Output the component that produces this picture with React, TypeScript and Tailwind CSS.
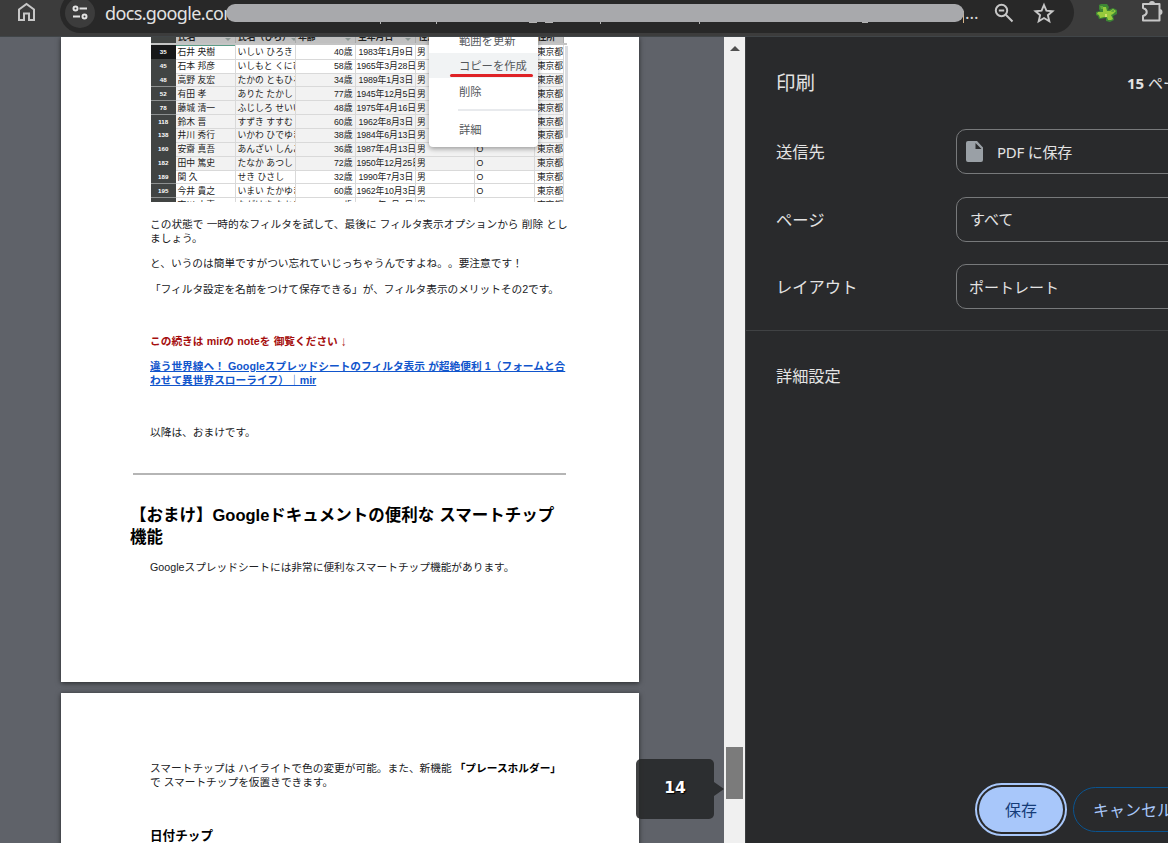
import type { ReactNode } from "react"

const rows = [
    { no: "35", name: "石井 央樹", kana: "いしい ひろき", age: "40歳", birth: "1983年1月9日" },
    { no: "45", name: "石本 邦彦", kana: "いしもと くにひこ", age: "58歳", birth: "1965年3月28日" },
    { no: "48", name: "高野 友宏", kana: "たかの ともひろ", age: "34歳", birth: "1989年1月3日", shaded: true },
    { no: "52", name: "有田 孝", kana: "ありた たかし", age: "77歳", birth: "1945年12月5日", shaded: true },
    { no: "78", name: "藤城 清一", kana: "ふじしろ せいいち", age: "48歳", birth: "1975年4月16日", shaded: true },
    { no: "118", name: "鈴木 晋", kana: "すずき すすむ", age: "60歳", birth: "1962年8月3日", shaded: true },
    { no: "138", name: "井川 秀行", kana: "いかわ ひでゆき", age: "38歳", birth: "1984年6月13日", shaded: true },
    { no: "160", name: "安齋 真吾", kana: "あんざい しんご", age: "36歳", birth: "1987年4月13日", shaded: true },
    { no: "182", name: "田中 篤史", kana: "たなか あつし", age: "72歳", birth: "1950年12月25日", shaded: true },
    { no: "189", name: "関 久", kana: "せき ひさし", age: "32歳", birth: "1990年7月3日" },
    { no: "195", name: "今井 貴之", kana: "いまい たかゆき", age: "60歳", birth: "1962年10月3日" },
    { no: "200", name: "市川 大喜", kana: "ながはま なおき", age: "34歳", birth: "1989年4月4日" },
]

const headings = ["氏名", "氏名（ひら）", "年齢", "生年月日", "性別", "", "住所"]

const columns = "grid grid-cols-[24.5px_60px_60px_60px_60.5px_58.5px_60.5px_28.5px]"

function Cell({ children, className = "pl-[2.5px]" }: { children?: ReactNode; className?: string }) {
    return (
        <div className={`overflow-hidden whitespace-nowrap border-r border-b border-[#d9d9d9] ${className}`}>
            {children}
        </div>
    )
}

function SheetTable() {
    return (
        <div className="relative h-[165px] w-[417px] overflow-hidden text-[8.8px] leading-[15px] text-[#222]">
            <div className={`${columns} h-[6px] w-[412.5px] overflow-hidden bg-[#c0c0c0]`}>
                <div className="h-[6px] bg-[#414443]" />
                {headings.map((h, i) => (
                    <div key={i} className="flex h-[6px] justify-between overflow-hidden border-r border-[#aaa] pl-[2.5px] pr-1 font-bold whitespace-nowrap">
                        <span className="-mt-[7px]">{h}</span>
                        {i < 4 && <span className="mt-[1px] h-0 w-0 border-x-[3px] border-t-[3px] border-x-transparent border-t-[#8b9693]" />}
                    </div>
                ))}
            </div>
            <div className="h-[2.3px] w-[416px] bg-[#c4c4c4]" />
            {rows.map((r, i) => (
                <div key={r.no} className={`${columns} h-[13.85px] w-[412.5px] ${r.shaded ? "bg-[#f2f2f2]" : "bg-white"}`}>
                    <div className={`border-b border-[#8d9090] text-center text-[6.2px] leading-[13.5px] font-bold text-white ${i === 0 ? "bg-[#171819]" : "bg-[#414443]"}`}>
                        {r.no}
                    </div>
                    <Cell className={i === 0 ? "pl-[2px] shadow-[inset_0_1px_0_#5b9c87]" : "pl-[2px]"}>{r.name}</Cell>
                    <Cell className="pl-[2px]">{r.kana}</Cell>
                    <Cell className="pr-[2px] text-right">{r.age}</Cell>
                    <Cell className="pl-[1px] text-center tracking-[-0.12px]">{r.birth}</Cell>
                    <Cell className="pl-[1px]">男</Cell>
                    <Cell className="pl-[2px]">O</Cell>
                    <Cell className="pl-[2px] tracking-[-0.2px]">東京都</Cell>
                </div>
            ))}
            <div className="absolute top-[9px] right-0 h-[92px] w-[3px] rounded-b bg-[#dadce0]" />

            {/* Filter view menu */}
            <div className="absolute -top-2 left-[278px] h-[118px] w-[109px] overflow-hidden rounded-b bg-white text-[11.3px] text-[#55585c] shadow-[0_2px_5px_rgba(0,0,0,0.35)]">
                <div className="h-[24px] pl-[30px] leading-[24px]">範囲を更新</div>
                <div className="h-[25px] bg-[#f1f3f4] pl-[30px] leading-[26px]">コピーを作成</div>
                <div className="h-[26px] pl-[30px] leading-[28px]">削除</div>
                <div className="mt-[5px] ml-[29px] h-[2px] bg-[#e8eaed]" />
                <div className="pt-[6px] pl-[30px] leading-[26px]">詳細</div>
            </div>
            <div className="absolute top-[37px] left-[299px] h-[3px] w-[83px] rounded-full bg-[#df2226]" />
        </div>
    )
}

function Preview() {
    return (
        <div className="flex w-[724px] shrink-0 flex-col items-start overflow-hidden bg-[#5f6269] pl-[61px] font-['Liberation_Sans','Noto_Sans_CJK_JP',sans-serif] [text-spacing-trim:space-all]">
            <div className="h-[645px] w-[578px] shrink-0 overflow-hidden bg-white pl-[90px] text-[10.69px] leading-[14px] whitespace-nowrap text-[#202124] shadow-[0_1px_5px_rgba(0,0,0,0.6)]">
                <SheetTable />
                <div className="-ml-px [word-spacing:0.25px]">
                    <p className="mt-[15px]">この状態で 一時的なフィルタを試して、最後に フィルタ表示オプションから 削除 とし<br />ましょう。</p>
                    <p className="mt-[11px]">と、いうのは簡単ですがつい忘れていじっちゃうんですよね。。要注意です！</p>
                    <p className="mt-[12px] tracking-[-0.03px]">「フィルタ設定を名前をつけて保存できる」が、フィルタ表示のメリットその2です。</p>
                    <p className="mt-[38px] font-bold text-[#a50e0e]">この続きは mirの noteを 御覧ください <span className="inline-block scale-y-125 font-normal">↓</span></p>
                    <p className="mt-[11px] font-bold text-[#1155cc] underline">
                        違う世界線へ！ Googleスプレッドシートのフィルタ表示 が超絶便利 1（フォームと合<br />わせて異世界スローライフ）｜mir
                    </p>
                    <p className="mt-[38px]">以降は、おまけです。</p>
                    <hr className="mt-[34px] -ml-[17px] w-[433px] border-t-2 border-[#b5b5b5]" />
                    <h1 className="mt-[29px] -ml-[20px] text-[16.5px] leading-[22px] font-bold text-black">
                        【おまけ】Googleドキュメントの便利な スマートチップ<br />機能
                    </h1>
                    <p className="mt-[12px]">Googleスプレッドシートには非常に便利なスマートチップ機能があります。</p>
                </div>
            </div>
            <div className="mt-[11px] h-[160px] w-[578px] shrink-0 bg-white pt-[68px] pl-[89px] text-[10.69px] leading-[14px] whitespace-nowrap text-[#202124] shadow-[0_1px_5px_rgba(0,0,0,0.6)]">
                <p>スマートチップは ハイライトで色の変更が可能。また、新機能 <b className="text-black">「プレースホルダー」</b><br />で スマートチップを仮置きできます。</p>
                <h2 className="mt-[39px] text-[12.6px] leading-[16px] font-bold text-black">日付チップ</h2>
            </div>
        </div>
    )
}

function Toolbar() {
    return (
        <header className="flex h-[37px] shrink-0 items-start overflow-hidden border-b border-[#404548] bg-[#3c3c3c]">
            <svg className="mt-[2px] ml-[16px] h-5 w-5 shrink-0" viewBox="0 0 20 20" fill="none" stroke="#c7c7c7" strokeWidth="2">
                <path d="M3 18V7.5L10.5 2L18 7.5V18H13V11.5H8V18Z" />
            </svg>
            <div className="ml-[24px] flex h-[41px] w-[1014px] shrink-0 -translate-y-2 items-center rounded-full bg-[#282828]">
                <div className="ml-[5px] flex h-[30px] w-[30px] shrink-0 items-center justify-center rounded-full bg-[#3c3c3c]">
                    <svg className="h-[18px] w-[18px]" viewBox="0 0 18 18" fill="none" stroke="#e3e3e3" strokeWidth="2">
                        <circle cx="4.5" cy="4.5" r="2" />
                        <path d="M8.5 4.5H16M2 12.5H9" />
                        <circle cx="13.5" cy="12.5" r="2" />
                    </svg>
                </div>
                <span className="ml-[10px] w-[121px] shrink-0 font-['Noto_Sans',sans-serif] text-[18px] leading-[24px] tracking-[-0.64px] whitespace-nowrap text-[#e3e3e3]">docs.google.com</span>
                {/* Masked part of the address, with the descenders that stay below it */}
                <div className="relative h-[18px] w-[738px] shrink-0 rounded-full bg-[#a8a9ac]">
                    <svg className="absolute top-[18px] left-0 h-[2px] w-full" viewBox="0 0 738 2" fill="#b4b4b4">
                        <path d="M154 0h1v2h-1zM210 0h1v2h-1zM303 0h8v1h-8zM319 0h8v1h-8zM374 0h1v2h-1zM473 0h1v2h-1zM636 0h6v1h-6z" />
                    </svg>
                </div>
                <div className="mt-[9px] -ml-px h-[12px] w-px shrink-0 bg-[#d8b58a]" />
                <span className="ml-[1px] w-[27px] shrink-0 font-['Noto_Sans',sans-serif] text-[17px] text-[#d8d8d8]">...</span>
                <svg className="h-6 w-6 shrink-0" viewBox="0 0 24 24" fill="none" stroke="#c7c7c7" strokeWidth="2">
                    <circle cx="9.5" cy="9.5" r="5.7" />
                    <path d="M13.8 13.8L20.5 20.5M6.8 9.5H12.2" />
                </svg>
                <svg className="ml-[16px] h-6 w-6 shrink-0" viewBox="0 0 24 24" fill="none" stroke="#c7c7c7" strokeWidth="1.9">
                    <path d="M12 4L14.4 9.6L20.5 10.2L15.9 14.2L17.3 20.2L12 17L6.7 20.2L8.1 14.2L3.5 10.2L9.6 9.6Z" />
                </svg>
            </div>
            <svg className="mt-[2px] ml-[21px] h-[22px] w-[22px] shrink-0" viewBox="0 0 22 22">
                <path d="M4 3L6 2L12 2L14 5L13 8L18 6L22 8V12L18 14L19 18L15 20L11 19V16L4 17L3 14L1 13V10L5 9L4 7Z" fill="#3d8634" />
                <path d="M8 5L11 5L12 9L15 9L18 7L21 9L18 12L16 13L18 17L16 18L13 18L12 15L9 15L5 16L4 13L2 12L3 10L8 10Z" fill="#96ca3c" />
                <path d="M5 4H8V7H6ZM17 8H19V10H16Z" fill="#63aa3c" />
                <path d="M10 12H12V15H10Z" fill="#d3df6a" />
            </svg>
            <svg className="-mt-px ml-[24px] h-6 w-6 shrink-0" viewBox="0 0 24 24" fill="none" stroke="#c7c7c7" strokeWidth="2">
                <path d="M2 5H18.5V21.5H2V17C7 15.5 7 10.5 2 9Z" strokeLinejoin="round" />
                <path d="M8 5A3 3 0 0 1 14 5ZM18.5 10A3 3 0 0 1 18.5 16Z" fill="#c7c7c7" stroke="none" />
            </svg>
        </header>
    )
}

function Field({ label, children, className = "" }: { label: string; children: ReactNode; className?: string }) {
    return (
        <div className={`flex h-[45px] items-center ${className}`}>
            <div className="w-[180px] shrink-0 pt-px text-[16.3px]">{label}</div>
            <div className="flex h-[45px] w-[240px] shrink-0 items-center rounded-[10px] border border-[#77797b] pl-[13px] text-[15px]">{children}</div>
        </div>
    )
}

function Settings() {
    return (
        <aside className="flex min-w-0 grow flex-col overflow-hidden border-l border-[#3b3d3f] bg-[#292a2c] font-['Noto_Sans','Noto_Sans_CJK_JP',sans-serif] whitespace-nowrap text-[#e3e3e3]">
            <div className="mt-[30px] flex h-[32px] items-center pl-[30px]">
                <h1 className="w-[351px] shrink-0 text-[19.5px]">印刷</h1>
                <span className="text-[15px]"><b>15</b> ページ</span>
            </div>
            <div className="pl-[30px]">
                <Field label="送信先" className="mt-[30px]">
                    <svg className="-ml-[4px] h-[21px] w-[17px]" viewBox="0 0 17 21">
                        <path d="M2 0H11L17 6.5V19A2 2 0 0 1 15 21H2A2 2 0 0 1 0 19V2A2 2 0 0 1 2 0ZM9.5 2V8H15.5Z" fill="#9aa0a6" fillRule="evenodd" />
                    </svg>
                    <span className="ml-[14px] pt-px tracking-[-0.25px]">PDF に保存</span>
                </Field>
                <Field label="ページ" className="mt-[23px]">すべて</Field>
                <Field label="レイアウト" className="mt-[22px]"><span className="-ml-px pt-px">ポートレート</span></Field>
            </div>
            <div className="mt-[21px] border-t border-[#404244]" />
            <div className="mt-[33px] pl-[30px] text-[16.2px] leading-6">詳細設定</div>
            <div className="mt-auto flex items-center pb-[7px] pl-[229px] text-[16px]">
                <button className="h-[53px] w-[92px] shrink-0 rounded-full border-2 border-[#a8c7fa] p-[2px]">
                    <span className="flex h-full items-center justify-center rounded-full bg-[#a8c7fa] text-[#153c78]">保存</span>
                </button>
                <button className="ml-[6px] h-[45px] w-[130px] shrink-0 rounded-full border border-[#0a5490] pl-[19px] text-left text-[#a8c7fa]">キャンセル</button>
            </div>
        </aside>
    )
}

export default function App() {
    return (
        <div className="flex h-[843px] w-[1168px] flex-col overflow-hidden bg-[#292a2c]">
            <Toolbar />
            <main className="relative flex min-h-0 grow">
                <Preview />
                <div className="flex w-[21px] shrink-0 flex-col items-center bg-[#f0f0f0]">
                    <div className="mt-[9px] h-0 w-0 border-x-[5px] border-b-[5px] border-x-transparent border-b-[#505050]" />
                    <div className="mt-[696px] h-[52px] w-[17px] bg-[#7b7b7b]" />
                </div>
                <Settings />

                {/* Current page indicator */}
                <div className="absolute top-[722px] left-[636px] flex items-center">
                    <div className="flex h-[60px] w-[78px] items-center justify-center rounded-[5px] bg-[rgba(38,39,40,0.88)] font-['DejaVu_Sans',sans-serif] text-[15.5px] font-bold text-white [text-shadow:1px_1px_1px_#000]">14</div>
                    <div className="h-0 w-0 border-y-[7px] border-l-[10px] border-y-transparent border-l-[rgba(38,39,40,0.88)]" />
                </div>
            </main>
        </div>
    )
}
